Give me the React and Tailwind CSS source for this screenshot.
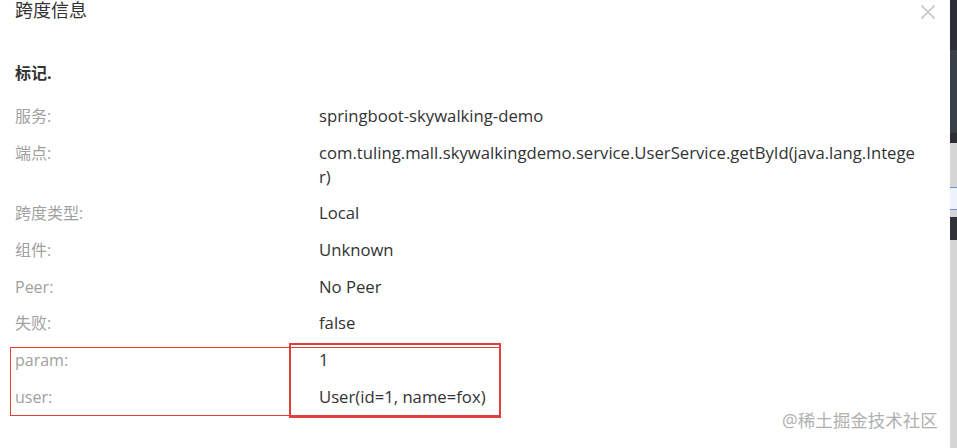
import React from 'react';

const ROWS = [
  { label: '服务:', value: 'springboot-skywalking-demo' },
  { label: '端点:', value: ['com.tuling.mall.skywalkingdemo.service.UserService.getById(java.lang.Intege', 'r)'] },
  { label: '跨度类型:', value: 'Local' },
  { label: '组件:', value: 'Unknown' },
  { label: 'Peer:', value: 'No Peer' },
  { label: '失败:', value: 'false' },
  { label: 'param:', value: '1' },
  { label: 'user:', value: 'User(id=1, name=fox)' },
];

const FONT = { fontFamily: '"Open Sans", "Noto Sans CJK SC", sans-serif' };

function CloseIcon() {
  return (
    <svg width="16" height="16" viewBox="0 0 16 16" className="text-[#cfcfcf]">
      <path d="M2 2 L14 14 M14 2 L2 14" stroke="currentColor" strokeWidth="2" strokeLinecap="round" />
    </svg>
  );
}

function SideStrip() {
  // the edge of the page behind the dialog
  return (
    <div className="w-[7px] flex flex-col shrink-0">
      <div className="h-[50px] bg-[#2c3036]" />
      <div className="h-[83px] bg-[#3b4047]" />
      <div className="h-[10px] bg-[#2b2f34]" />
      <div className="h-[44px] bg-[#d6d6d6]" />
      <div className="h-[23px] bg-[#eef3fb] border-y border-[#6c8fd6]" />
      <div className="h-[7px] bg-[#d6d6d6]" />
      <div className="h-[23px] bg-[#2f3338]" />
      <div className="flex-1 bg-[#d6d6d6]" />
    </div>
  );
}

export default function App() {
  return (
    <div className="w-[957px] h-[448px] overflow-hidden bg-white flex relative" style={FONT}>
      <div className="flex-1 flex flex-col pl-[15px]">
        {/* header */}
        <div className="flex items-center justify-between mt-[-2px] h-[24px] pr-[14px]">
          <span className="text-[18px] leading-[24px] text-[#333]">跨度信息</span>
          <span className="mt-[4px]"><CloseIcon /></span>
        </div>

        <div className="mt-[39px] text-[16px] leading-[24px] font-bold text-[#333]">标记.</div>

        <div className="mt-[19px] flex flex-col gap-y-[12.7px] text-[16px] leading-[24px]">
          {ROWS.map((r) => (
            <div key={r.label} className="grid grid-cols-[304px_1fr]">
              <span className="text-[#a0a0a0]">{r.label}</span>
              <span className="text-[#333] text-[16.7px]">
                {Array.isArray(r.value)
                  ? r.value.map((line, i) => (
                      <span key={i} className="block">{line}</span>
                    ))
                  : r.value}
              </span>
            </div>
          ))}
        </div>
      </div>

      <SideStrip />

      {/* red annotation boxes */}
      <div className="absolute left-[10px] top-[347px] w-[490px] h-[69px] border border-[#e2403b]" />
      <div className="absolute left-[289px] top-[343px] w-[212px] h-[75px] border-2 border-[#e2403b]" />

      {/* watermark */}
      <div className="absolute left-[782px] top-[408px] text-[17.5px] leading-[24px] text-[#b0b0b0] whitespace-nowrap">
        @稀土掘金技术社区
      </div>
    </div>
  );
}
